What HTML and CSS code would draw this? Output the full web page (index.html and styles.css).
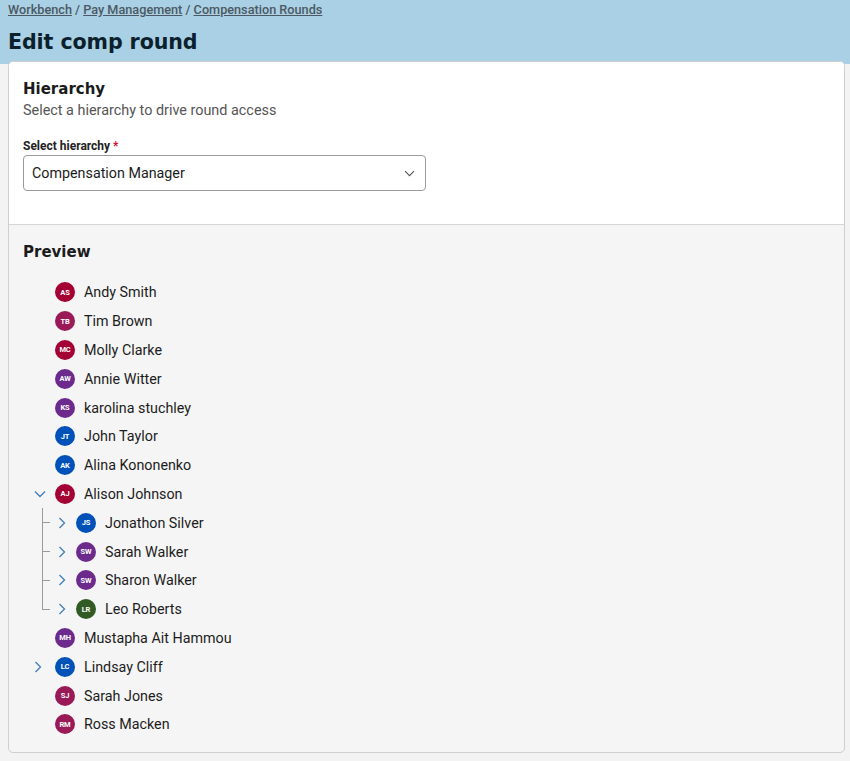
FILE: index.html
```html
<!DOCTYPE html>
<html>
<head>
<meta charset="utf-8">
<link rel="stylesheet" href="styles.css">
</head>
<body>
<header class="page-header">
  <nav class="crumbs"><a href="#">Workbench</a> / <a href="#">Pay Management</a> / <a href="#">Compensation Rounds</a></nav>
  <h1 class="title">Edit comp round</h1>
</header>
<main class="card">
  <section class="card-top">
    <h2 class="section-title">Hierarchy</h2>
    <p class="section-sub">Select a hierarchy to drive round access</p>
    <label class="field-label">Select hierarchy <span class="req">*</span></label>
    <div class="select">
      <span>Compensation Manager</span>
      <svg class="select-caret" width="11" height="7" viewBox="0 0 11 7"><path d="M1 1.2 L5.5 5.7 L10 1.2" fill="none" stroke="#555" stroke-width="1.1"/></svg>
    </div>
  </section>
  <section class="card-bottom">
    <h2 class="section-title preview-title">Preview</h2>
    <ul class="tree">
      <li><div class="row"><span class="tog"></span><span class="av c-red">AS</span><span class="name">Andy Smith</span></div></li>
      <li><div class="row"><span class="tog"></span><span class="av c-mag">TB</span><span class="name">Tim Brown</span></div></li>
      <li><div class="row"><span class="tog"></span><span class="av c-red">MC</span><span class="name">Molly Clarke</span></div></li>
      <li><div class="row"><span class="tog"></span><span class="av c-pur">AW</span><span class="name">Annie Witter</span></div></li>
      <li><div class="row"><span class="tog"></span><span class="av c-pur">KS</span><span class="name">karolina stuchley</span></div></li>
      <li><div class="row"><span class="tog"></span><span class="av c-blu">JT</span><span class="name">John Taylor</span></div></li>
      <li><div class="row"><span class="tog"></span><span class="av c-blu">AK</span><span class="name">Alina Kononenko</span></div></li>
      <li>
        <div class="row"><span class="tog"><svg width="12" height="8" viewBox="0 0 12 8"><path d="M1 1.5 L6 6.5 L11 1.5" fill="none" stroke="#3f7fb8" stroke-width="1.3"/></svg></span><span class="av c-red">AJ</span><span class="name">Alison Johnson</span></div>
        <ul class="tree sub">
          <li><div class="row"><span class="tog"><svg width="8" height="12" viewBox="0 0 8 12"><path d="M1.5 1 L6.5 6 L1.5 11" fill="none" stroke="#3f7fb8" stroke-width="1.3"/></svg></span><span class="av c-blu">JS</span><span class="name">Jonathon Silver</span></div></li>
          <li><div class="row"><span class="tog"><svg width="8" height="12" viewBox="0 0 8 12"><path d="M1.5 1 L6.5 6 L1.5 11" fill="none" stroke="#3f7fb8" stroke-width="1.3"/></svg></span><span class="av c-pur">SW</span><span class="name">Sarah Walker</span></div></li>
          <li><div class="row"><span class="tog"><svg width="8" height="12" viewBox="0 0 8 12"><path d="M1.5 1 L6.5 6 L1.5 11" fill="none" stroke="#3f7fb8" stroke-width="1.3"/></svg></span><span class="av c-pur">SW</span><span class="name">Sharon Walker</span></div></li>
          <li><div class="row"><span class="tog"><svg width="8" height="12" viewBox="0 0 8 12"><path d="M1.5 1 L6.5 6 L1.5 11" fill="none" stroke="#3f7fb8" stroke-width="1.3"/></svg></span><span class="av c-grn">LR</span><span class="name">Leo Roberts</span></div></li>
        </ul>
      </li>
      <li><div class="row"><span class="tog"></span><span class="av c-pur">MH</span><span class="name">Mustapha Ait Hammou</span></div></li>
      <li><div class="row"><span class="tog"><svg width="8" height="12" viewBox="0 0 8 12"><path d="M1.5 1 L6.5 6 L1.5 11" fill="none" stroke="#3f7fb8" stroke-width="1.3"/></svg></span><span class="av c-blu">LC</span><span class="name">Lindsay Cliff</span></div></li>
      <li><div class="row"><span class="tog"></span><span class="av c-mag">SJ</span><span class="name">Sarah Jones</span></div></li>
      <li><div class="row"><span class="tog"></span><span class="av c-mag">RM</span><span class="name">Ross Macken</span></div></li>
    </ul>
  </section>
</main>
</body>
</html>
```
FILE: styles.css
```css
* { box-sizing: border-box; }
html, body { margin: 0; padding: 0; }
body {
  background: #f3f3f3;
  font-family: Roboto, "Liberation Sans", sans-serif;
  color: #1c1c1c;
  height: 761px;
  overflow: hidden;
}
.page-header {
  background: #aad0e5;
  padding: 2px 8px 0 8px;
  height: 64px;
}
.crumbs {
  font-size: 12.7px;
  font-weight: 500;
  color: #4c5963;
  line-height: 16px;
}
.crumbs a { color: #4c5963; text-decoration: underline; }
.title {
  margin: 12px 0 0 0;
  font-family: "DejaVu Sans", sans-serif;
  font-weight: 700;
  font-size: 20.6px;
  line-height: 24px;
  color: #0b1f2d;
  letter-spacing: -0.1px;
}
.card {
  margin: -3px 5px 0 8px;
  border: 1px solid #cfcfcf;
  border-radius: 5px;
  background: #f5f5f5;
  overflow: hidden;
  height: 692px;
}
.card-top {
  background: #fff;
  padding: 16px 14px 0 14px;
  height: 163px;
  border-bottom: 1px solid #d6d6d6;
}
.section-title {
  margin: 0;
  font-family: "DejaVu Sans", sans-serif;
  font-weight: 700;
  font-size: 15px;
  line-height: 22px;
  color: #1b1b1b;
}
.section-sub {
  margin: 2px 0 0 0;
  font-size: 14.4px;
  line-height: 18px;
  color: #555;
}
.field-label {
  display: block;
  margin-top: 19px;
  font-size: 12px;
  font-weight: 700;
  line-height: 14px;
  color: #222;
}
.req { color: #c8102e; }
.select {
  margin-top: 2px;
  width: 403px;
  height: 36px;
  border: 1px solid #9a9a9a;
  border-radius: 4px;
  background: #fff;
  display: flex;
  align-items: center;
  justify-content: space-between;
  padding: 0 10px 0 8px;
  font-size: 14.3px;
  color: #1c1c1c;
}
.card-bottom {
  padding: 16px 14px 0 14px;
}
.preview-title { margin-bottom: 15px; }
.tree {
  list-style: none;
  margin: 0;
  padding: 0 0 0 7px;
}
.tree.sub { padding-left: 21px; }
.tree.sub > li { position: relative; }
.tree.sub > li::before {
  content: "";
  position: absolute;
  left: -9px;
  top: 14px;
  width: 8px;
  border-top: 1px solid #9a9a9a;
}
.tree.sub > li::after {
  content: "";
  position: absolute;
  left: -9px;
  top: 0;
  bottom: 0;
  border-left: 1px solid #9a9a9a;
}
.tree.sub > li:last-child::after { bottom: 14px; }
.row {
  display: flex;
  align-items: center;
  height: 28.8px;
}
.tog {
  width: 25px;
  flex: none;
  display: flex;
  align-items: center;
  justify-content: flex-start;
  padding-left: 4px;
}
.tog svg { display: block; }
.tree.sub .tog { padding-left: 7px; }
.av {
  width: 20px;
  height: 20px;
  border-radius: 50%;
  flex: none;
  color: #fff;
  font-size: 7.5px;
  font-weight: 700;
  display: flex;
  align-items: center;
  justify-content: center;
  letter-spacing: -0.2px;
}
.c-red { background: #a50034; }
.c-mag { background: #9a1a57; }
.c-pur { background: #6c2b8c; }
.c-blu { background: #0052b8; }
.c-grn { background: #315a24; }
.name {
  margin-left: 9px;
  font-size: 14.3px;
  color: #1c1c1c;
}
```
